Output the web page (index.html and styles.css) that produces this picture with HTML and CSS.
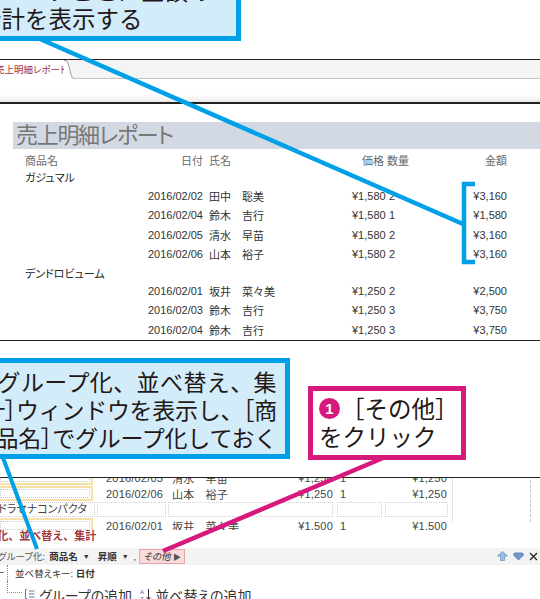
FILE: index.html
```html
<!DOCTYPE html>
<html lang="ja">
<head>
<meta charset="utf-8">
<title>売上明細レポート</title>
<link rel="stylesheet" href="styles.css">
</head>
<body>
<div class="page">
  <div class="topspace"></div>

  <div class="tabbar">
    <div class="tab"><span class="tab-text">売上明細レポート</span></div>
    <svg class="tab-edge" width="10" height="19" viewBox="0 0 10 19"><path d="M0,0 L1,0 Q3,0 4,3 L7.5,16 Q8.3,18.5 10,18.5 L10,19 L0,19 Z" fill="#fff"/><path d="M0,0.5 L1,0.5 Q3,0.5 4,3 L7.5,16 Q8.3,18.5 10,18.5" fill="none" stroke="#9a9a9a" stroke-width="1"/></svg>
    <div class="tab-fill"></div>
  </div>
  <div class="ribbon"></div>

  <div class="report">
    <div class="title">売上明細レポート</div>
    <div class="rows">
      <div class="row head"><span class="c-prod">商品名</span><span class="c-date">日付</span><span class="c-name">氏名</span><span class="c-price">価格</span><span class="c-qty">数量</span><span class="c-amt">金額</span></div>
      <div class="grp">ガジュマル</div>
      <div class="row"><span></span><span class="c-date">2016/02/02</span><span class="c-name">田中　聡美</span><span class="c-price">¥1,580</span><span class="c-qty">2</span><span class="c-amt">¥3,160</span></div>
      <div class="row"><span></span><span class="c-date">2016/02/04</span><span class="c-name">鈴木　吉行</span><span class="c-price">¥1,580</span><span class="c-qty">1</span><span class="c-amt">¥1,580</span></div>
      <div class="row"><span></span><span class="c-date">2016/02/05</span><span class="c-name">清水　早苗</span><span class="c-price">¥1,580</span><span class="c-qty">2</span><span class="c-amt">¥3,160</span></div>
      <div class="row"><span></span><span class="c-date">2016/02/06</span><span class="c-name">山本　裕子</span><span class="c-price">¥1,580</span><span class="c-qty">2</span><span class="c-amt">¥3,160</span></div>
      <div class="grp g2">デンドロビューム</div>
      <div class="row"><span></span><span class="c-date">2016/02/01</span><span class="c-name">坂井　菜々美</span><span class="c-price">¥1,250</span><span class="c-qty">2</span><span class="c-amt">¥2,500</span></div>
      <div class="row"><span></span><span class="c-date">2016/02/03</span><span class="c-name">鈴木　吉行</span><span class="c-price">¥1,250</span><span class="c-qty">3</span><span class="c-amt">¥3,750</span></div>
      <div class="row"><span></span><span class="c-date">2016/02/04</span><span class="c-name">鈴木　吉行</span><span class="c-price">¥1,250</span><span class="c-qty">3</span><span class="c-amt">¥3,750</span></div>
    </div>
  </div>

  <div class="gap"></div>

  <div class="dv">
    <div class="dv-frame">
      <div class="dv-rows">
        <div class="dr first"><span class="yl"><i></i></span><span class="d-date">2016/02/05</span><span class="d-name">清水　早苗</span><span class="d-price">¥1,250</span><span class="d-qty">1</span><span class="d-amt">¥1,250</span></div>
        <div class="dr"><span class="yl"><i></i></span><span class="d-date">2016/02/06</span><span class="d-name">山本　裕子</span><span class="d-price">¥1,250</span><span class="d-qty">1</span><span class="d-amt">¥1,250</span></div>
        <div class="dr"><span class="dc dc1">ドラセナコンパクタ</span><span class="dc dc2"></span><span class="dc dc3"></span><span class="dc dc4"></span><span class="dc dc5"></span></div>
        <div class="dr"><span class="yl"><i></i></span><span class="d-date">2016/02/01</span><span class="d-name">坂井　菜々美</span><span class="d-price">¥1,500</span><span class="d-qty">1</span><span class="d-amt">¥1,500</span></div>
      </div>
    </div>
  </div>

  <div class="ptitle">グループ化、並べ替え、集計</div>

  <div class="gbar">
    <div class="gleft">
      <span class="g-label">グループ化:</span>
      <span class="g-val">商品名</span>
      <span class="caret">▼</span>
      <span class="g-val g-sort">昇順</span>
      <span class="caret">▼</span>
      <span class="comma">,</span>
      <span class="more">その他 <b>▶</b></span>
    </div>
    <div class="gright">
      <svg width="11" height="10" viewBox="0 0 11 10"><polygon points="5.5,0.5 10.5,5 7.5,5 7.5,9.5 3.5,9.5 3.5,5 0.5,5" fill="#9dbde2" stroke="#5f8cc0" stroke-width="0.7"/></svg>
      <svg width="11" height="10" viewBox="0 0 11 10"><polygon points="1.5,2 9.5,2 10.5,4 5.5,9 0.5,4" fill="#6f98cf" stroke="#3d67a3" stroke-width="0.7"/></svg>
      <svg width="9" height="9" viewBox="0 0 9 9"><path d="M1,1 L8,8 M8,1 L1,8" stroke="#222" stroke-width="1.3"/></svg>
    </div>
  </div>

  <div class="sk">
    <span class="sk-tick"></span>
    <span class="sk-line"></span>
    <span class="sk-text">並べ替えキー: <b>日付</b></span>
  </div>

  <div class="addrow">
    <span class="tree-l"></span>
    <svg class="ico-grp" width="10" height="10" viewBox="0 0 10 10"><path d="M0.5,0.5 V9.5 M0.5,0.5 H2 M0.5,9.5 H2 M4,2 H9.5 M4,5 H9.5 M4,8 H9.5" stroke="#5a7fb0" stroke-width="1" fill="none"/></svg>
    <span class="add-txt">グループの追加</span>
    <svg class="ico-sort" width="11" height="13" viewBox="0 0 11 13"><text x="0" y="5.5" font-size="6" font-family="Liberation Sans" fill="#5b55b5">A</text><text x="0" y="12.5" font-size="6" font-family="Liberation Sans" fill="#5b55b5">Z</text><path d="M8.5,1 V11.5 M6.5,9 L8.5,11.5 L10.5,9" stroke="#333" stroke-width="1" fill="none"/></svg>
    <span class="add-txt add-txt2">並べ替えの追加</span>
  </div>

  <svg class="lines" width="540" height="599" viewBox="0 0 540 599">
    <line x1="40" y1="39" x2="463" y2="224" stroke="#00a0e9" stroke-width="4.5"/>
    <path d="M475,184 H464 V262 H475" fill="none" stroke="#00a0e9" stroke-width="4.5"/>
    <line x1="2" y1="455" x2="37" y2="549" stroke="#00a0e9" stroke-width="4"/>
    <line x1="383" y1="458" x2="163" y2="551" stroke="#d7197e" stroke-width="4.5"/>
  </svg>

  <div class="co co-top">
    <div>グループごとに金額の</div>
    <div>合計を表示する</div>
  </div>

  <div class="co co-left">
    <div class="l1">［グループ化、並べ替え、集</div>
    <div class="l2">計<span class="pb">］</span>ウィンドウを表示し、［商</div>
    <div class="l3">品名<span class="pb">］</span>でグループ化しておく</div>
  </div>

  <div class="co co-mag">
    <div class="mag-l1"><span class="num">1</span><span>［その他］</span></div>
    <div>をクリック</div>
  </div>
</div>
</body>
</html>
```

FILE: styles.css
```css
* { box-sizing: border-box; }
html, body { margin: 0; padding: 0; }
body {
  width: 540px;
  height: 599px;
  overflow: hidden;
  background: #fff;
  font-family: "Liberation Sans", "Noto Sans CJK JP", sans-serif;
  color: #333;
}
.page {
  position: relative;
  width: 540px;
  height: 599px;
  overflow: hidden;
}

.topspace { height: 59px; }

/* tab bar */
.tabbar {
  height: 20px;
  border-top: 1px solid #222;
  background: #f4f4f4;
  display: flex;
}
.tab {
  width: 64px;
  height: 19px;
  background: #fff;
  overflow: hidden;
  white-space: nowrap;
}
.tab-text {
  display: block;
  margin-left: -5px;
  font-size: 9.5px;
  line-height: 19px;
  color: #a3303d;
  font-feature-settings: "palt";
}
.tab-edge { display: block; }
.tab-fill {
  flex: 1;
  height: 19px;
  border-bottom: 1px solid #c4c4c4;
}

.ribbon {
  height: 25px;
  border-bottom: 2px solid #222;
  background: linear-gradient(to bottom, #fff 0, #fff 15px, #f2f2f2 21px, #e4e4e4 23px);
}

/* report */
.report {
  padding-top: 18px;
  border-bottom: 1.5px solid #222;
}
.title {
  margin-left: 13px;
  height: 27px;
  background: #d3d9e3;
  padding-left: 3px;
  font-size: 22px;
  line-height: 27px;
  color: #777;
  letter-spacing: -1.3px;
  font-feature-settings: "palt";
  white-space: nowrap;
}
.rows { margin-top: 3px; }
.row {
  display: grid;
  grid-template-columns: 146px 57px 149px 32px 34px 89px;
  height: 19.5px;
  align-items: center;
  font-size: 11px;
  color: #333;
  white-space: nowrap;
}
.row.head { height: 16px; color: #6a6a6a; }
.c-prod { padding-left: 25px; }
.c-date { text-align: right; }
.c-name { padding-left: 6px; }
.c-price { text-align: right; }
.c-qty { padding-left: 5px; }
.row.head .c-qty { padding-left: 3px; }
.c-amt { text-align: right; }
.grp {
  height: 18px;
  display: flex;
  align-items: center;
  padding-left: 25px;
  font-size: 11px;
  color: #222;
  font-feature-settings: "palt";
}
.grp.g2 { height: 17px; }

.gap { height: 136px; }

/* design view */
.dv {
  height: 53px;
  border-top: 1.5px solid #222;
  overflow: hidden;
}
.dv-frame {
  width: 531px;
  height: 100%;
  border-right: 1px dashed #c4c4c4;
}
.dv-rows {
  width: 453px;
  height: 100%;
  border-right: 1px dotted #c8c8c8;
}
.dr {
  display: flex;
  height: 16px;
  align-items: center;
  font-size: 11px;
  color: #444;
  letter-spacing: 0.2px;
  white-space: nowrap;
}
.dr.first { margin-top: -8px; }
.yl {
  display: block;
  width: 96px;
  height: 15px;
  margin-left: -3px;
  border: 2px solid #f7dfa5;
  padding: 1px;
}
.yl i {
  display: block;
  height: 100%;
  border: 1px dotted #c8c8c8;
}
.d-date { margin-left: 13px; width: 58px; }
.d-name { margin-left: 8px; width: 118px; }
.d-price { width: 43px; text-align: right; }
.d-qty { margin-left: 7px; width: 20px; }
.d-amt { width: 87px; text-align: right; }
.dc {
  display: block;
  height: 15px;
  border: 1px dotted #cfcfcf;
  line-height: 13px;
  overflow: hidden;
}
.dc1 { margin-left: -3px; width: 98px; font-feature-settings: "palt"; letter-spacing: 0; }
.dc2 { margin-left: 2px; width: 69px; }
.dc3 { margin-left: 2px; width: 165px; }
.dc4 { margin-left: 4px; width: 45px; }
.dc5 { margin-left: 3px; width: 63px; }

/* group pane */
.ptitle {
  height: 18px;
  margin-left: -46px;
  font-size: 11px;
  line-height: 12px;
  font-weight: bold;
  color: #a5363a;
  white-space: nowrap;
}
.gbar {
  height: 17px;
  background: #f3f3f3;
  display: flex;
  align-items: center;
  justify-content: space-between;
  font-size: 9.5px;
  white-space: nowrap;
}
.gleft {
  display: flex;
  align-items: center;
  margin-left: -2px;
  font-feature-settings: "palt";
}
.g-label { color: #555; }
.g-val { margin-left: 4px; font-weight: bold; color: #333; }
.g-sort { margin-left: 8px; }
.caret { margin-left: 5px; font-size: 7px; color: #333; }
.comma { margin-left: 5px; color: #333; }
.more {
  margin-left: 3px;
  height: 15px;
  line-height: 13px;
  padding: 0 3px;
  background: #f9dbdb;
  border: 1px solid #e6a7a7;
  font-style: italic;
  color: #333;
}
.more b { font-style: normal; font-weight: normal; font-size: 8px; color: #555; }
.gright {
  display: flex;
  align-items: center;
  gap: 5px;
  margin-right: 2px;
}
.gright svg { display: block; }

.sk {
  height: 16px;
  display: flex;
  align-items: center;
  font-size: 9.5px;
  color: #333;
  white-space: nowrap;
  font-feature-settings: "palt";
}
.sk-tick {
  width: 4px;
  height: 1px;
  background: #56709a;
  margin-right: 3px;
}
.sk-line {
  align-self: stretch;
  border-left: 1px dotted #888;
}
.sk-text { margin-left: 7px; }
.sk-text b { font-weight: bold; }

.addrow {
  height: 22px;
  display: flex;
  align-items: flex-start;
  white-space: nowrap;
}
.tree-l {
  margin-left: 7px;
  width: 15px;
  height: 12px;
  border-left: 1px dotted #888;
  border-bottom: 1px dotted #888;
}
.ico-grp { display: block; margin-left: 3px; margin-top: 8px; }
.add-txt {
  margin-left: 4px;
  margin-top: 6px;
  font-size: 14px;
  line-height: 18px;
  color: #333;
  font-feature-settings: "palt";
}
.ico-sort { display: block; margin-left: 8px; margin-top: 7px; }
.add-txt2 { margin-left: 4px; }

/* overlays */
.lines {
  position: absolute;
  left: 0;
  top: 0;
  pointer-events: none;
}
.co {
  position: absolute;
  font-family: "Noto Sans CJK JP", sans-serif;
  font-weight: 400;
  font-size: 23px;
  line-height: 28px;
  color: #231815;
  white-space: nowrap;
}
.pb { font-feature-settings: "palt"; }
.co-top {
  left: -40px;
  top: -31px;
  width: 281px;
  height: 72px;
  background: #d3ecfa;
  border: 5px solid #00a0e9;
  padding: 2px 0 0 13px;
  font-size: 23.5px;
  overflow: hidden;
}
.co-left {
  left: -40px;
  top: 358px;
  width: 330px;
  height: 101px;
  background: #d3ecfa;
  border: 5px solid #00a0e9;
  padding: 4px 8px 0 0;
  text-align: right;
  overflow: hidden;
}
.co-left .l1 { letter-spacing: 0.4px; }
.co-left .l2 { letter-spacing: -0.3px; }
.co-left .l3 { letter-spacing: -0.25px; }
.co-mag {
  left: 308px;
  top: 386px;
  width: 158px;
  height: 74px;
  background: #fff;
  border: 5px solid #d7197e;
  padding: 3px 0 0 6px;
  font-size: 23.5px;
}
.mag-l1 {
  display: flex;
  align-items: center;
  height: 28px;
}
.num {
  display: block;
  width: 21px;
  height: 21px;
  border-radius: 50%;
  background: #d7197e;
  color: #fff;
  font-family: "Liberation Sans", sans-serif;
  font-weight: bold;
  font-size: 15px;
  line-height: 21px;
  text-align: center;
  margin-right: 1px;
}
```
